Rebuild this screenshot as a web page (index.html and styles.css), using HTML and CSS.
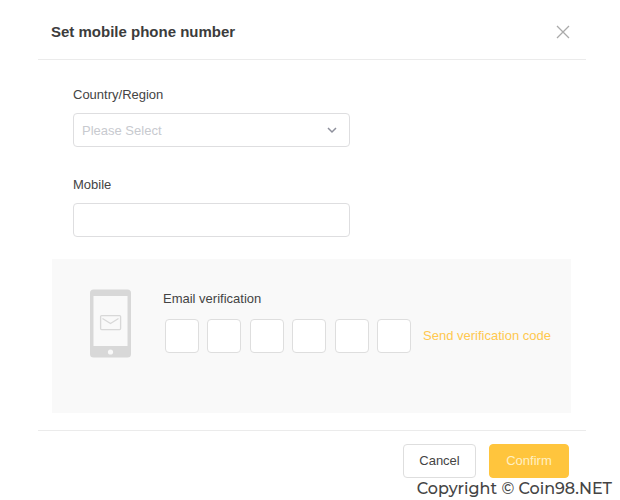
FILE: index.html
```html
<!DOCTYPE html>
<html lang="en">
  <head>
    <meta charset="UTF-8" />
    <meta name="viewport" content="width=device-width, initial-scale=1.0" />
    <title>Set mobile phone number</title>
    <link rel="stylesheet" href="styles.css" />
  </head>
  <body>
    <form class="dialog">
      <header class="dialog-header">
        <h1>Set mobile phone number</h1>
        <button type="button" class="close-button" aria-label="Close">
          <svg width="14" height="14" viewBox="0 0 14 14">
            <path d="M1 1L13 13M13 1L1 13" />
          </svg>
        </button>
      </header>

      <div class="dialog-body">
        <div class="field">
          <label for="country">Country/Region</label>
          <div class="select-wrap">
            <select id="country" class="control">
              <option value="">Please Select</option>
            </select>
            <svg class="chevron" width="10" height="8" viewBox="0 0 10 8">
              <path d="M1 2L5 6L9 2" />
            </svg>
          </div>
        </div>

        <div class="field">
          <label for="mobile">Mobile</label>
          <input type="tel" id="mobile" class="control" />
        </div>
      </div>

      <section class="verification">
        <svg class="phone-icon" width="41" height="69" viewBox="0 0 41 69">
          <rect y="0.5" width="41" height="68" rx="3.5" fill="#d8d8d8" />
          <rect x="3.5" y="7" width="34" height="50" fill="#f9f9f9" />
          <rect x="10.6" y="26.6" width="20" height="14" rx="1" fill="none" stroke="#d8d8d8" stroke-width="1.3" />
          <path d="M12.5 29.5L20.5 34.5L28.5 29.5" fill="none" stroke="#d8d8d8" stroke-width="1.3" />
          <circle cx="20.5" cy="63" r="2.6" fill="#f9f9f9" />
        </svg>
        <div class="verification-content">
          <label for="code-1">Email verification</label>
          <div class="code-row">
            <div class="code-inputs">
              <input type="text" id="code-1" maxlength="1" />
              <input type="text" maxlength="1" aria-label="Digit 2" />
              <input type="text" maxlength="1" aria-label="Digit 3" />
              <input type="text" maxlength="1" aria-label="Digit 4" />
              <input type="text" maxlength="1" aria-label="Digit 5" />
              <input type="text" maxlength="1" aria-label="Digit 6" />
            </div>
            <a href="#" class="send-link">Send verification code</a>
          </div>
        </div>
      </section>

      <footer class="dialog-footer">
        <button type="button" class="button cancel">Cancel</button>
        <button type="submit" class="button confirm">Confirm</button>
      </footer>
    </form>

    <p class="copyright">Copyright © Coin98.NET</p>
  </body>
</html>
```
FILE: styles.css
```css
* {
  box-sizing: border-box;
}
body {
  margin: 0;
  background-color: #fff;
  color: #444;
  font-family: "Liberation Sans", Arial, sans-serif;
  font-size: 13px;
  line-height: 16px;
}
button,
input,
select {
  margin: 0;
  font: inherit;
}
.dialog {
  margin: 0 34px 0 38px;
}
.dialog-header {
  display: flex;
  align-items: center;
  justify-content: space-between;
  padding: 20px 16px 15px 13px;
  border-bottom: 1px solid #ebebeb;
}
h1 {
  margin: 0;
  font-size: 15px;
  line-height: 24px;
  color: #3c3c3c;
}
.close-button {
  display: flex;
  padding: 0;
  border: none;
  background: none;
  cursor: pointer;
}
.close-button svg {
  fill: none;
  stroke: #aaa;
  stroke-width: 1.3;
}
.dialog-body {
  display: flex;
  flex-direction: column;
  gap: 30px;
  padding: 27px 35px 22px;
}
.field {
  display: flex;
  flex-direction: column;
  gap: 10px;
  max-width: 277px;
}
.control {
  display: block;
  width: 100%;
  height: 34px;
  padding: 2px 8px 0;
  border: 1px solid #dedee0;
  border-radius: 4px;
  background-color: #fff;
}
.select-wrap {
  position: relative;
}
select.control {
  appearance: none;
  color: #c8cacf;
}
.chevron {
  position: absolute;
  top: 13px;
  right: 13px;
  fill: none;
  stroke: #8e909c;
  stroke-width: 1.5;
  pointer-events: none;
}
.verification {
  display: flex;
  gap: 32px;
  min-height: 154px;
  margin: 0 15px 17px 14px;
  padding: 30px 20px 30px 38px;
  background-color: #f9f9f9;
}
.phone-icon {
  flex: none;
}
.verification-content {
  display: flex;
  flex: 1;
  flex-direction: column;
  gap: 12px;
  padding-top: 2px;
}
.code-row {
  display: flex;
  align-items: center;
  gap: 12px;
}
.code-inputs {
  display: flex;
  flex: 1;
  justify-content: space-between;
  padding-left: 2px;
}
.code-inputs input {
  width: 34px;
  height: 34px;
  padding: 0;
  border: 1px solid #dedede;
  border-radius: 4px;
  background-color: #fff;
  text-align: center;
}
.send-link {
  color: #ffc84f;
  text-decoration: none;
  white-space: nowrap;
}
.dialog-footer {
  display: flex;
  justify-content: flex-end;
  gap: 13px;
  padding: 13px 17px 0;
  border-top: 1px solid #ebebeb;
}
.button {
  height: 34px;
  border: 1px solid #dedede;
  border-radius: 4px;
  cursor: pointer;
}
.cancel {
  width: 73px;
  background-color: #fff;
  color: #444;
}
.confirm {
  width: 80px;
  border-color: #ffc53d;
  background-color: #ffc53d;
  color: #fff0c4;
}
.copyright {
  margin: 0 8px 0 0;
  font-family: Montserrat, Inter, sans-serif;
  font-size: 16px;
  font-weight: 500;
  line-height: 22px;
  text-align: right;
}
```
